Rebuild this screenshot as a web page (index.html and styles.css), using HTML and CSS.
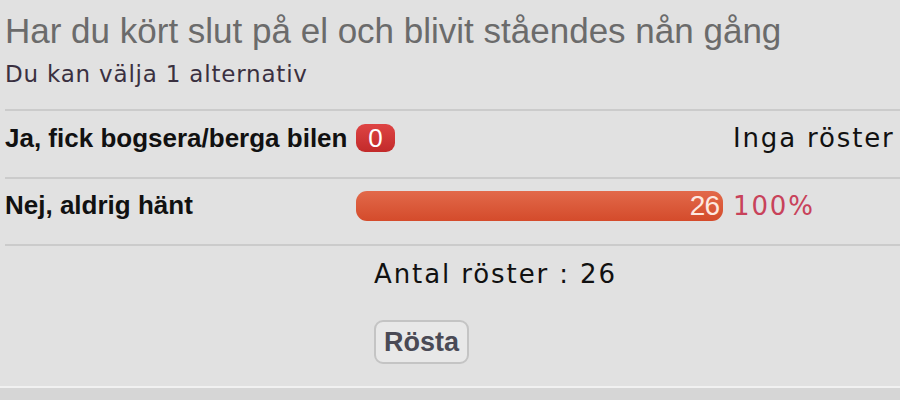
FILE: index.html
```html
<!DOCTYPE html>
<html lang="sv">
<head>
  <meta charset="UTF-8">
  <title>Omröstning</title>
  <link rel="stylesheet" href="styles.css">
</head>
<body>
  <div class="poll">
    <h2 class="poll-title">Har du kört slut på el och blivit ståendes nån gång</h2>
    <div class="poll-hint">Du kan välja 1 alternativ</div>

    <div class="poll-row">
      <div class="poll-label">Ja, fick bogsera/berga bilen</div>
      <div class="poll-bar-cell"><span class="poll-zero">0</span></div>
      <div class="poll-result">Inga röster</div>
    </div>

    <div class="poll-row">
      <div class="poll-label">Nej, aldrig hänt</div>
      <div class="poll-bar-cell">
        <div class="poll-bar" style="width: 100%"><span>26</span></div>
      </div>
      <div class="poll-result percent">100%</div>
    </div>

    <div class="poll-footer">
      <div class="poll-total">Antal röster : 26</div>
      <button class="poll-vote" type="button">Rösta</button>
    </div>
  </div>
  <div class="page-bottom"></div>
</body>
</html>
```

FILE: styles.css
```css
body {
  margin: 0;
  background: #d6d6d6;
  font-family: "DejaVu Sans", Verdana, sans-serif;
}
.poll {
  background: #e1e1e1;
  padding: 0 0 0 5px;
  height: 386px;
  border-bottom: 2px solid #f1f1f1;
}
.poll-title {
  margin: 0;
  padding-top: 11px;
  font-family: "Liberation Sans", Arial, sans-serif;
  font-weight: normal;
  font-size: 35px;
  line-height: 40px;
  color: #6b6b6b;
}
.poll-hint {
  margin-top: 9px;
  padding-bottom: 21px;
  font-size: 23px;
  line-height: 28px;
  letter-spacing: 0.8px;
  color: #3a3040;
}
.poll-row {
  display: flex;
  align-items: center;
  height: 54px;
  padding-bottom: 12px;
  border-top: 2px solid #cbcbcb;
}
.poll-row + .poll-row {
  height: 53px;
}
.poll-label {
  width: 351px;
  font-family: "Liberation Sans", Arial, sans-serif;
  font-weight: bold;
  font-size: 26px;
  color: #111;
}
.poll-bar-cell {
  width: 367px;
}
.poll-zero {
  display: inline-block;
  width: 39px;
  height: 28px;
  border-radius: 9px;
  background: linear-gradient(#de4444, #c22a2a);
  color: #fff;
  text-align: center;
  font-family: "Liberation Sans", Arial, sans-serif;
  font-size: 26px;
  line-height: 28px;
}
.poll-bar {
  height: 30px;
  border-radius: 11px;
  background: linear-gradient(#e2694a, #d44b2b);
  text-align: right;
}
.poll-bar span {
  padding-right: 4px;
  color: #fde8e0;
  font-family: "Liberation Sans", Arial, sans-serif;
  font-size: 28px;
  line-height: 30px;
  letter-spacing: -1px;
}
.poll-result {
  padding-left: 10px;
  font-size: 26px;
  letter-spacing: 1.85px;
  color: #111;
}
.poll-result.percent {
  color: #c8425a;
}
.poll-footer {
  border-top: 2px solid #cbcbcb;
  padding: 13px 0 0 369px;
}
.poll-total {
  font-size: 26px;
  line-height: 30px;
  letter-spacing: 1.9px;
  color: #111;
}
.poll-vote {
  display: block;
  margin-top: 31px;
  padding: 2px 8px;
  border: 2px solid #c4c4c4;
  border-radius: 9px;
  background: #e8e8e8;
  font-family: "Liberation Sans", Arial, sans-serif;
  font-weight: bold;
  font-size: 27px;
  line-height: 36px;
  color: #4a4a55;
}
```
